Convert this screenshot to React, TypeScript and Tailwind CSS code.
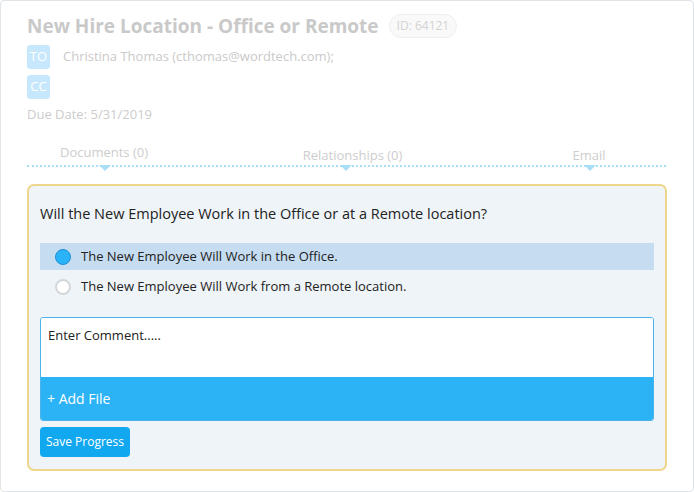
import React from "react";

const font = { fontFamily: '"Open Sans", "Noto Sans", sans-serif' };

function Radio({ checked }: { checked: boolean }) {
  return checked ? (
    <span className="h-4 w-4 shrink-0 rounded-full border border-[#1c8fd6] bg-[#2ab4f7]" />
  ) : (
    <span className="h-4 w-4 shrink-0 rounded-full border-2 border-[#d3d7da] bg-white" />
  );
}

function Caret({ left }: { left: string }) {
  return (
    <span
      className={`absolute bottom-0 ${left} h-0 w-0 border-x-[6px] border-t-[6px] border-x-transparent border-t-[#a9def7]`}
    />
  );
}

export default function App() {
  return (
    <div className="h-[492px] w-[694px] bg-white" style={font}>
      <div className="h-full w-full rounded-[4px] border border-[#dfe4e8] bg-white pl-[26px] pt-[13px]">
        <div className="flex items-center gap-[10px]">
          <h1 className="text-[19px] font-bold leading-[24px] text-[#c9c9c9]">
            New Hire Location - Office or Remote
          </h1>
          <span className="rounded-full border border-[#efefef] bg-[#f9f9f9] px-[7px] py-[3px] text-[12px] leading-[16px] text-[#d2d2d2]">
            ID: 64121
          </span>
        </div>

        <div className="mt-[7px] flex items-center gap-[13px]">
          <span className="flex h-[24px] w-[23px] items-center justify-center rounded-[3px] bg-[#c7e8fc] text-[13px] text-white">
            TO
          </span>
          <span className="text-[13px] text-[#cacaca]">Christina Thomas (cthomas@wordtech.com);</span>
        </div>
        <div className="mt-[6px] flex">
          <span className="flex h-[24px] w-[23px] items-center justify-center rounded-[3px] bg-[#c7e8fc] text-[13px] text-white">
            CC
          </span>
        </div>
        <p className="mt-[6px] text-[13px] leading-[18px] text-[#cccccc]">Due Date: 5/31/2019</p>

        <div className="relative mt-[18px] h-[30px] w-[639px]">
          <div className="absolute bottom-[4px] left-0 right-0 border-b-2 border-dotted border-[#a9def7]" />
          <div className="grid h-full grid-cols-[154px_1fr_154px]">
            <div className="relative flex justify-center">
              <span className="mt-[3px] text-[13px] leading-[16px] text-[#cdcdcd]">Documents (0)</span>
              <Caret left="left-[72px]" />
            </div>
            <div className="relative flex justify-center">
              <span className="mt-[6px] pl-[12px] text-[13px] leading-[16px] text-[#cdcdcd]">Relationships (0)</span>
              <Caret left="left-[159px]" />
            </div>
            <div className="relative flex justify-center">
              <span className="mt-[6px] text-[13px] leading-[16px] text-[#cdcdcd]">Email</span>
              <Caret left="left-[72px]" />
            </div>
          </div>
        </div>

        <div className="mt-[13px] w-[640px] rounded-[7px] border-2 border-[#efd68c] bg-[#eff4f8] px-[11px] pb-[12px] pt-[18px]">
          <p className="text-[14.5px] leading-[20px] text-[#222]">
            Will the New Employee Work in the Office or at a Remote location?
          </p>
          <div className="mt-[19px]">
            <div className="flex h-[27px] items-center gap-[10px] bg-[#c6dcf1] pl-[15px]">
              <Radio checked />
              <span className="text-[13px] text-[#222]">The New Employee Will Work in the Office.</span>
            </div>
            <div className="mt-[3px] flex h-[27px] items-center gap-[10px] pl-[15px]">
              <Radio checked={false} />
              <span className="text-[13px] text-[#222]">The New Employee Will Work from a Remote location.</span>
            </div>
          </div>
          <div className="mt-[17px] overflow-hidden rounded-[3px] border border-[#4cb2ea]">
            <div className="h-[59px] bg-white px-[7px] pt-[8px] text-[13px] leading-[18px] text-[#222]">
              Enter Comment.....
            </div>
            <div className="flex h-[43px] items-center bg-[#2cb3f5] px-[6px] text-[14px] text-white">
              + Add File
            </div>
          </div>
          <button className="mt-[6px] h-[30px] rounded-[4px] bg-[#11a8f0] px-[6px] text-[12px] text-white">
            Save Progress
          </button>
        </div>
      </div>
    </div>
  );
}
